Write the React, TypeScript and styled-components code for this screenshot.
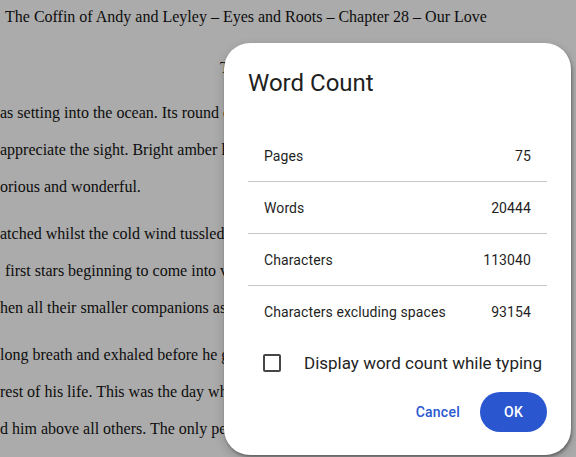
import styled, { createGlobalStyle } from 'styled-components';

const GlobalStyle = createGlobalStyle`
  html, body {
    margin: 0;
    padding: 0;
    background: #ababab;
  }
  body {
    width: 576px;
    height: 457px;
    overflow: hidden;
    font-family: "Liberation Serif", "Times New Roman", serif;
  }
`;

const stats = [
  { label: 'Pages', value: '75' },
  { label: 'Words', value: '20444' },
  { label: 'Characters', value: '113040' },
  { label: 'Characters excluding spaces', value: '93154' },
];

const paragraphs = [
  [
    { text: 'as setting into the ocean. Its round orange glow', indent: 0 },
    { text: 'appreciate the sight. Bright amber light', indent: 0 },
    { text: 'orious and wonderful.', indent: 0 },
  ],
  [
    { text: 'atched whilst the cold wind tussled his hair', indent: 0 },
    { text: 'first stars beginning to come into view', indent: 5 },
    { text: 'hen all their smaller companions as well', indent: 0 },
  ],
  [
    { text: 'long breath and exhaled before he got up', indent: 0 },
    { text: 'rest of his life. This was the day when', indent: 0 },
    { text: 'd him above all others. The only person', indent: 0 },
  ],
];

const App = () => {
  return (
    <>
      <GlobalStyle />
      <Page>
        <DocTitle>The Coffin of Andy and Leyley – Eyes and Roots – Chapter 28 – Our Love</DocTitle>
        <Subtitle>T</Subtitle>
        {paragraphs.map((lines, i) => (
          <Paragraph key={i}>
            {lines.map((line) => (
              <Line key={line.text} $indent={line.indent}>
                {line.text}
              </Line>
            ))}
          </Paragraph>
        ))}
      </Page>

      <Dialog role="dialog" aria-label="Word Count">
        <Title>Word Count</Title>
        <Stats>
          {stats.map((s) => (
            <StatRow key={s.label}>
              <span>{s.label}</span>
              <span>{s.value}</span>
            </StatRow>
          ))}
        </Stats>
        <CheckRow>
          <Box />
          <CheckLabel>Display word count while typing</CheckLabel>
        </CheckRow>
        <Actions>
          <TextButton>Cancel</TextButton>
          <FilledButton>OK</FilledButton>
        </Actions>
      </Dialog>
    </>
  );
};

export default App;

const Page = styled.div`
  color: #0d0d0d;
  font-size: 16px;
  white-space: nowrap;
`;

const DocTitle = styled.div`
  margin: 5px 0 0;
  padding-left: 5px;
  line-height: 24px;
`;

const Subtitle = styled.div`
  margin-top: 20px;
  padding-left: 220px;
  line-height: 37px;
`;

const Paragraph = styled.div`
  margin-top: 8px;
  & + & {
    margin-top: 10px;
  }
`;

const Line = styled.div<{ $indent: number }>`
  line-height: 37px;
  padding-left: ${(p) => p.$indent}px;
`;

const Dialog = styled.div`
  position: absolute;
  left: 224px;
  top: 43px;
  width: 347px;
  height: 412px;
  box-sizing: border-box;
  padding: 24px 24px 23px;
  background: #fff;
  border-radius: 26px;
  box-shadow: 1px 2px 3px rgba(0, 0, 0, 0.35), 0 4px 10px 2px rgba(0, 0, 0, 0.12);
  display: flex;
  flex-direction: column;
  font-family: Roboto, "Liberation Sans", Arial, sans-serif;
  color: #1f1f1f;
`;

const Title = styled.h2`
  margin: 0 0 31px;
  font-size: 24px;
  font-weight: 400;
  line-height: 32px;
  color: #1f1f1f;
`;

const Stats = styled.div`
  display: flex;
  flex-direction: column;
`;

const StatRow = styled.div`
  height: 52px;
  box-sizing: border-box;
  padding: 0 16px;
  display: flex;
  align-items: center;
  justify-content: space-between;
  font-size: 14px;
  letter-spacing: 0.1px;
  border-bottom: 1px solid #c7c7c7;

  &:last-child {
    border-bottom: none;
  }
`;

const CheckRow = styled.label`
  margin-top: 5px;
  height: 40px;
  padding-left: 15px;
  display: flex;
  align-items: center;
  gap: 23px;
`;

const Box = styled.span`
  width: 18px;
  height: 18px;
  box-sizing: border-box;
  border: 2px solid #444746;
  border-radius: 2px;
  flex: none;
`;

const CheckLabel = styled.span`
  font-size: 17px;
  color: #1f1f1f;
`;

const Actions = styled.div`
  margin-top: 9px;
  display: flex;
  justify-content: flex-end;
  gap: 8px;
`;

const TextButton = styled.button`
  height: 40px;
  padding: 0 12px;
  border: none;
  background: transparent;
  border-radius: 20px;
  font-family: inherit;
  font-size: 14px;
  font-weight: 500;
  letter-spacing: 0.25px;
  color: #2a57d0;
  cursor: pointer;
`;

const FilledButton = styled(TextButton)`
  width: 67px;
  padding: 0;
  background: #2a57d0;
  color: #fff;
`;
